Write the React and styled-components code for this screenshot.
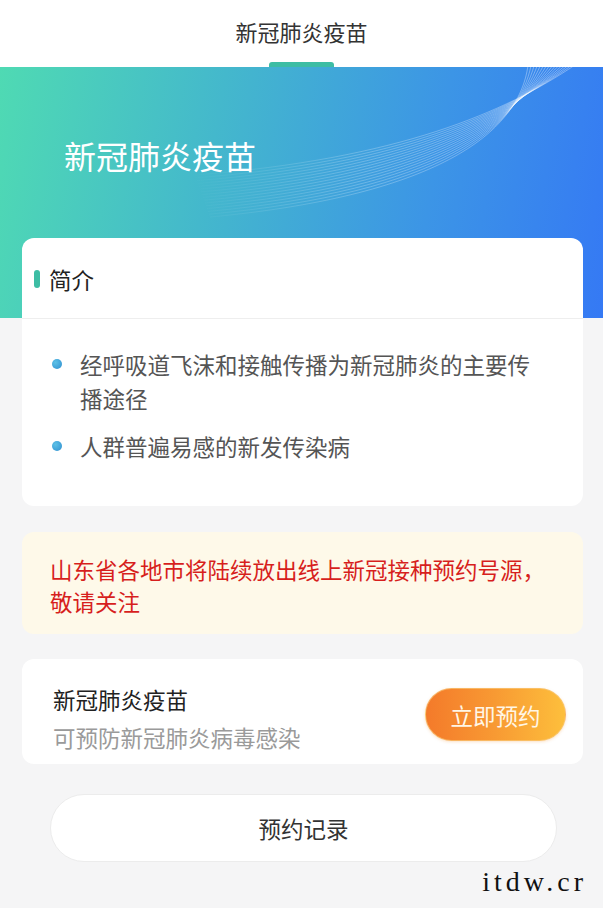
import React from "react";
import styled, { createGlobalStyle } from "styled-components";

const GlobalStyle = createGlobalStyle`
  html, body {
    margin: 0;
    padding: 0;
    background: #f5f5f6;
  }
  body {
    font-family: "Noto Sans CJK SC", "Noto Sans", sans-serif;
    overflow: hidden;
  }
  * { box-sizing: border-box; }
`;

const Page = styled.div`
  width: 603px;
  min-height: 908px;
  background: #f5f5f6;
  overflow: hidden;
`;

const NavBar = styled.header`
  height: 67px;
  background: #fff;
  display: flex;
  flex-direction: column;
  align-items: center;
  padding-top: 16px;
`;

const NavTitle = styled.div`
  font-size: 22px;
  line-height: 30px;
  color: #333;
`;

const NavIndicator = styled.div`
  margin-top: 16px;
  width: 65px;
  height: 5px;
  border-radius: 3px 3px 0 0;
  background: #3dbda4;
`;

const Main = styled.main`
  position: relative;
  background:
    linear-gradient(100deg, #4fdab3 0%, #44b8cc 35%, #3c95e6 70%, #3579f4 100%) top left / 100% 251px no-repeat,
    #f5f5f6;
  padding-bottom: 10px;
`;

const Waves = styled.svg`
  position: absolute;
  top: 0;
  left: 0;
  width: 603px;
  height: 251px;
  pointer-events: none;
`;

const HeroTitle = styled.h1`
  position: relative;
  margin: 0;
  padding: 68px 0 0 64px;
  height: 171px;
  font-size: 32px;
  line-height: 40px;
  font-weight: 400;
  color: #fff;
`;

const Column = styled.div`
  position: relative;
  padding: 0 20px 0 22px;
  display: flex;
  flex-direction: column;
`;

const Card = styled.section`
  background: #fff;
  border-radius: 12px;
  margin-top: ${(p) => p.$gap || 0}px;
`;

const CardHead = styled.div`
  height: 81px;
  display: flex;
  align-items: center;
  padding: 2px 0 0 12px;
  border-bottom: 1px solid #eeeeee;
`;

const HeadMark = styled.span`
  width: 6px;
  height: 18px;
  border-radius: 3px;
  background: #3dbda4;
  margin-right: 9px;
`;

const HeadText = styled.h2`
  margin: 0;
  font-size: 22.5px;
  line-height: 30px;
  font-weight: 400;
  color: #222;
`;

const List = styled.ul`
  list-style: none;
  margin: 0;
  padding: 28px 43px 43px 58px;
  display: flex;
  flex-direction: column;
  gap: 14px;
`;

const Item = styled.li`
  position: relative;
  font-size: 22.5px;
  line-height: 34px;
  color: #555;

  &::before {
    content: "";
    position: absolute;
    left: -28px;
    top: 12px;
    width: 10px;
    height: 10px;
    border-radius: 50%;
    background: radial-gradient(circle at 35% 35%, #5cc0e6, #2f8fd0);
  }
`;

const Notice = styled.div`
  margin-top: 26px;
  background: #fef9e9;
  border-radius: 12px;
  padding: 21px 28px 17px 28px;
  font-size: 22.5px;
  line-height: 32px;
  color: #d71f1d;
`;

const VaccineRow = styled(Card)`
  display: flex;
  align-items: center;
  justify-content: space-between;
  padding: 24px 17px 11px 31px;
`;

const VaccineInfo = styled.div`
  display: flex;
  flex-direction: column;
  gap: 6px;
`;

const VaccineName = styled.div`
  font-size: 22.5px;
  line-height: 32px;
  color: #222;
`;

const VaccineDesc = styled.div`
  font-size: 22.5px;
  line-height: 32px;
  color: #9a9a9a;
`;

const BookButton = styled.button`
  margin-top: -7px;
  width: 141px;
  height: 53px;
  border: 1px solid rgba(250, 200, 120, 0.7);
  border-radius: 27px;
  background: linear-gradient(90deg, #f47a2a 0%, #f89a33 50%, #fdbf3c 100%);
  box-shadow: 0 1px 3px rgba(240, 140, 40, 0.25);
  color: #fff6e6;
  font-family: inherit;
  font-size: 22.5px;
  line-height: 30px;
  padding: 0;
`;

const RecordButton = styled.button`
  margin: 30px 26px 0 28px;
  height: 68px;
  border: 1px solid #ececec;
  border-radius: 34px;
  background: #fff;
  color: #333;
  font-family: inherit;
  font-size: 22.5px;
  line-height: 30px;
`;

const Mark = styled.div`
  margin-top: 5px;
  text-align: right;
  margin-right: -4px;
  font-family: "Liberation Serif", serif;
  font-size: 28px;
  line-height: 30px;
  letter-spacing: 4px;
  color: #111;
`;

// ribbon of thin lines sweeping from the lower left up to the top-right edge
const lerp = (a, b, t) => a + (b - a) * t;
const upper = [[575, -2], [505, 45], [400, 92], [195, 108]];
const lower = [[528, -2], [520, 62], [445, 128], [210, 150]];
const waveLines = Array.from({ length: 16 }, (_, i) => {
  const t = i / 15;
  const p = upper.map((pt, k) => [lerp(pt[0], lower[k][0], t), lerp(pt[1], lower[k][1], t)]);
  return `M${p[3][0]} ${p[3][1]} C${p[2][0]} ${p[2][1]} ${p[1][0]} ${p[1][1]} ${p[0][0]} ${p[0][1]}`;
});

export default function App() {
  return (
    <Page>
      <GlobalStyle />
      <NavBar>
        <NavTitle>新冠肺炎疫苗</NavTitle>
        <NavIndicator />
      </NavBar>
      <Main>
        <Waves viewBox="0 0 603 251">
          <defs>
            <linearGradient id="waveFade" x1="190" y1="0" x2="580" y2="0" gradientUnits="userSpaceOnUse">
              <stop offset="0" stopColor="#ffffff" stopOpacity="0" />
              <stop offset="0.45" stopColor="#ffffff" stopOpacity="0.3" />
              <stop offset="1" stopColor="#ffffff" stopOpacity="0.45" />
            </linearGradient>
          </defs>
          <g fill="none" stroke="url(#waveFade)" strokeWidth="0.8">
            {waveLines.map((d, i) => (
              <path key={i} d={d} />
            ))}
          </g>
        </Waves>
        <HeroTitle>新冠肺炎疫苗</HeroTitle>
        <Column>
          <Card>
            <CardHead>
              <HeadMark />
              <HeadText>简介</HeadText>
            </CardHead>
            <List>
              <Item>经呼吸道飞沫和接触传播为新冠肺炎的主要传播途径</Item>
              <Item>人群普遍易感的新发传染病</Item>
            </List>
          </Card>
          <Notice>山东省各地市将陆续放出线上新冠接种预约号源，敬请关注</Notice>
          <VaccineRow $gap={25}>
            <VaccineInfo>
              <VaccineName>新冠肺炎疫苗</VaccineName>
              <VaccineDesc>可预防新冠肺炎病毒感染</VaccineDesc>
            </VaccineInfo>
            <BookButton>立即预约</BookButton>
          </VaccineRow>
        </Column>
        <Column>
          <RecordButton>预约记录</RecordButton>
          <Mark>itdw.cr</Mark>
        </Column>
      </Main>
    </Page>
  );
}
